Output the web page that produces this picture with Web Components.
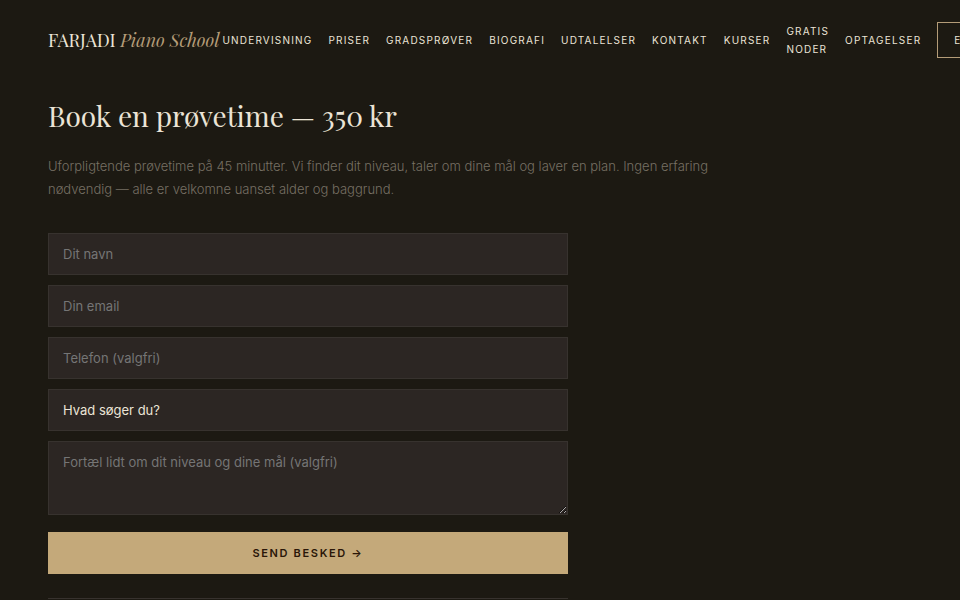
<!DOCTYPE html>
<html lang="da">
<head>
<meta charset="utf-8">
<meta name="viewport" content="width=device-width, initial-scale=1">
<title>Farjadi Piano School</title>
<style>
:root {
    --bg: #1c1912;
    --field: #2c2623;
    --line: #37322e;
    --cream: #ebe4d6;
    --gold: #c4a97a;
    --accent: #b49c78;
    --muted: #777064;
    --serif: "Playfair Display", "Liberation Serif", serif;
    --sans: Inter, "Liberation Sans", sans-serif;
}
body {
    margin: 0;
    overflow-x: hidden;
    background: var(--bg);
    color: var(--cream);
    font-family: var(--sans);
}
</style>
</head>
<body>
<site-header>
    FARJADI <em>Piano School</em>
    <nav-link slot="nav" href="#undervisning">UNDERVISNING</nav-link>
    <nav-link slot="nav" href="#priser">PRISER</nav-link>
    <nav-link slot="nav" href="#gradsproever">GRADSPRØVER</nav-link>
    <nav-link slot="nav" href="#biografi">BIOGRAFI</nav-link>
    <nav-link slot="nav" href="#udtalelser">UDTALELSER</nav-link>
    <nav-link slot="nav" href="#kontakt">KONTAKT</nav-link>
    <nav-link slot="nav" href="#kurser">KURSER</nav-link>
    <nav-link slot="nav" href="#noder">GRATIS NODER</nav-link>
    <nav-link slot="nav" href="#optagelser">OPTAGELSER</nav-link>
    <nav-link slot="nav" href="#en" boxed>EN</nav-link>
</site-header>
<booking-section>
    <span slot="title">Book en prøvetime — 350 kr</span>
    <span slot="intro">Uforpligtende prøvetime på 45 minutter. Vi finder dit niveau, taler om dine mål og laver en plan. Ingen erfaring nødvendig — alle er velkomne uanset alder og baggrund.</span>
    <form-field type="text" label="Dit navn"></form-field>
    <form-field type="email" label="Din email"></form-field>
    <form-field type="tel" label="Telefon (valgfri)"></form-field>
    <form-field type="select" label="Hvad søger du?"></form-field>
    <form-field type="textarea" label="Fortæl lidt om dit niveau og dine mål (valgfri)"></form-field>
    <send-button slot="action">SEND BESKED →</send-button>
</booking-section>

<script>
class SiteHeader extends HTMLElement {
    constructor() {
        super();

        this.sr = this.attachShadow({ mode: "open" });
    }

    connectedCallback() {
        this.sr.innerHTML = `${this.styles()}
<header>
    <a class="logo" href="#"><slot></slot></a>
    <nav><slot name="nav"></slot></nav>
</header>`;
    }

    styles() {
        return `<style>
:host {
    display: block;
}
header {
    display: flex;
    align-items: center;
    justify-content: space-between;
    gap: 3px;
    padding: 22px 48px;
}
.logo {
    color: var(--cream);
    font-family: var(--serif);
    font-size: 18px;
    line-height: 32px;
    text-decoration: none;
    white-space: nowrap;
}
::slotted(em) {
    color: var(--accent);
}
nav {
    display: flex;
    align-items: center;
    gap: 16px;
}
</style>`;
    }
}

class NavLink extends HTMLElement {
    constructor() {
        super();

        this.sr = this.attachShadow({ mode: "open" });
    }

    connectedCallback() {
        this.sr.innerHTML = `${this.styles()}<a><slot></slot></a>`;
        this.sr.querySelector("a").href = this.getAttribute("href");
    }

    styles() {
        return `<style>
:host {
    display: block;
    font-size: 10px;
    line-height: 18px;
    letter-spacing: 0.12em;
}
a {
    display: block;
    color: var(--cream);
    text-decoration: none;
}
:host([boxed]) a {
    padding: 8px 16px;
    border: 1px solid var(--accent);
    white-space: nowrap;
}
</style>`;
    }
}

class BookingSection extends HTMLElement {
    constructor() {
        super();

        this.sr = this.attachShadow({ mode: "open" });
    }

    connectedCallback() {
        this.sr.innerHTML = `${this.styles()}
<main>
    <h1><slot name="title"></slot></h1>
    <p><slot name="intro"></slot></p>
    <form>
        <div class="fields"><slot></slot></div>
        <slot name="action"></slot>
    </form>
    <hr>
</main>`;
    }

    styles() {
        return `<style>
:host {
    display: block;
}
main {
    padding: 16px 48px 0;
}
h1 {
    margin: 0 0 20px;
    font-family: var(--serif);
    font-size: 28px;
    font-weight: 400;
    line-height: 39px;
}
p {
    max-width: 680px;
    margin: 0 0 32px;
    color: var(--muted);
    font-size: 13px;
    font-weight: 300;
    line-height: 23px;
}
form, hr {
    max-width: 520px;
}
.fields {
    display: grid;
    gap: 10px;
    margin-bottom: 17px;
}
hr {
    margin: 24px 0 0;
    border: 0;
    border-top: 1px solid var(--line);
}
</style>`;
    }
}

class FormField extends HTMLElement {
    constructor() {
        super();

        this.sr = this.attachShadow({ mode: "open" });
    }

    connectedCallback() {
        const type = this.getAttribute("type");
        const label = this.getAttribute("label");

        this.sr.innerHTML = this.styles();

        let control;
        if (type === "select") {
            control = document.createElement("select");
            control.add(new Option(label, ""));
        } else if (type === "textarea") {
            control = document.createElement("textarea");
            control.placeholder = label;
        } else {
            control = document.createElement("input");
            control.type = type;
            control.placeholder = label;
        }
        control.setAttribute("aria-label", label);

        this.sr.appendChild(control);
    }

    styles() {
        return `<style>
:host {
    display: block;
}
input, select, textarea {
    display: block;
    box-sizing: border-box;
    width: 100%;
    height: 42px;
    margin: 0;
    padding: 12px 14px;
    border: 1px solid var(--line);
    border-radius: 0;
    outline: none;
    appearance: none;
    background: var(--field);
    color: var(--cream);
    font-family: inherit;
    font-size: 13px;
    line-height: 16px;
}
select {
    padding: 0 14px;
}
textarea {
    height: 74px;
    resize: vertical;
}
::placeholder {
    color: #757575;
}
</style>`;
    }
}

class SendButton extends HTMLElement {
    constructor() {
        super();

        this.sr = this.attachShadow({ mode: "open" });
    }

    connectedCallback() {
        this.sr.innerHTML = `${this.styles()}<button type="button"><slot></slot></button>`;
    }

    styles() {
        return `<style>
:host {
    display: block;
}
button {
    display: block;
    width: 100%;
    padding: 14px;
    border: 0;
    background: var(--gold);
    color: #2a1608;
    font-family: inherit;
    font-size: 11px;
    font-weight: 600;
    line-height: 14px;
    letter-spacing: 0.15em;
    cursor: pointer;
}
</style>`;
    }
}

customElements.define("site-header", SiteHeader);
customElements.define("nav-link", NavLink);
customElements.define("booking-section", BookingSection);
customElements.define("form-field", FormField);
customElements.define("send-button", SendButton);
</script>
</body>
</html>
